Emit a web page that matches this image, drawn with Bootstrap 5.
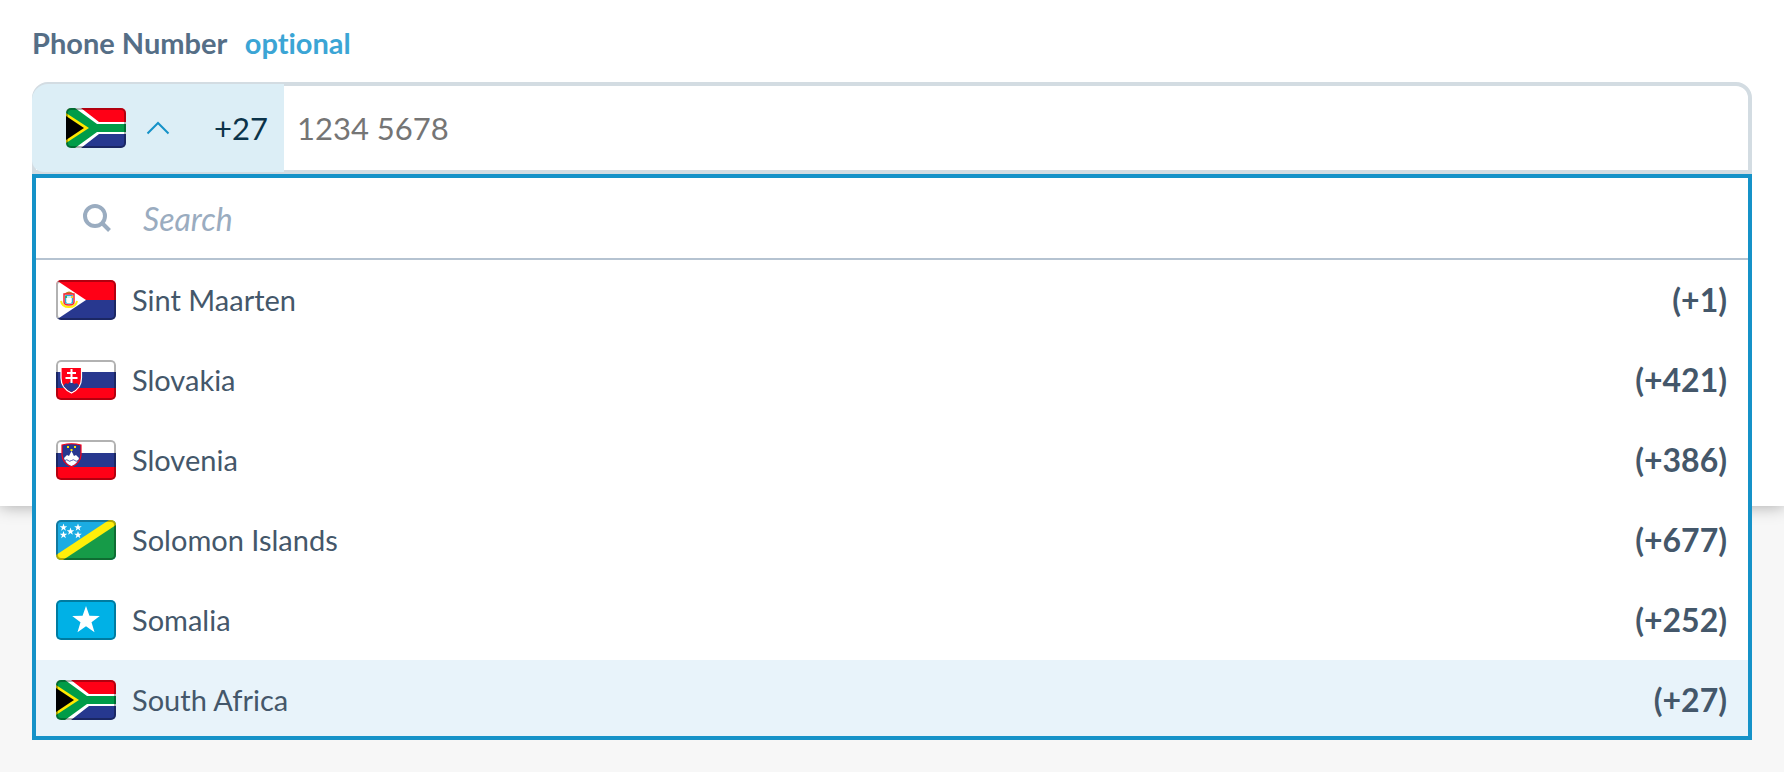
<!DOCTYPE html>
<html lang="en">
<head>
<meta charset="utf-8">
<meta name="viewport" content="width=device-width, initial-scale=1">
<title>Phone Number</title>
<link href="https://cdn.jsdelivr.net/npm/bootstrap@5.3.0/dist/css/bootstrap.min.css" rel="stylesheet">
<style>
  body { font-family: Lato, sans-serif; background: #f7f7f7; color: #44576a; font-size: 29px; font-variant-ligatures: none; }
  .panel { background: #fff; padding: 23px 32px 332px; box-shadow: 0 0 16px rgba(0,0,0,.34); }
  .field-label { color: #556e86; font-weight: 700; line-height: 40px; margin-bottom: 19px; }
  .field-label .hint { color: #3ba5d5; margin-left: 11px; }
  .phone-field { height: 92px; border: 4px solid #d3dce2; border-radius: 16px 16px 0 0; background: #fff; font-size: 31px; }
  .prefix { width: 252px; margin: -2px 0 -2px -4px; padding: 0 16px 0 34px; border: 0; border-radius: 16px 0 0 12px; background: #dceef6; color: #0b3349; }
  .prefix .chevron { margin-left: 20px; }
  .plain-input { border: 0; outline: 0; background: transparent; min-width: 0; }
  .phone-field .plain-input { padding: 0 13px; color: #44576a; }
  .phone-field .plain-input::placeholder { color: #757575; opacity: 1; }
  .country-menu { border: 4px solid #1592c8; background: #fff; z-index: 5; }
  .search-row { height: 82px; border-bottom: 2px solid #b5c3d1; padding-left: 47px; gap: 32px; }
  .search-row .plain-input { font-size: 32px; font-style: italic; padding: 2px 0 0; color: #44576a; }
  .search-row .plain-input::placeholder { color: #9aacc0; opacity: 1; }
  .country-list { max-height: 476px; overflow-y: auto; scrollbar-width: none; }
  .country-list::-webkit-scrollbar { display: none; }
  .country { height: 80px; flex: none; border: 0; background: #fff; color: #44576a; padding: 0 21px 0 20px; gap: 16px; text-align: left; }
  .country.selected { background: #e8f3fa; }
  .country .dial { font-size: 32px; font-weight: 700; }
  .flag { width: 60px; height: 40px; border-radius: 5px; overflow: hidden; flex: none; }
  .flag svg { display: block; }
</style>
</head>
<body class="min-vh-100">
<svg width="0" height="0" class="position-absolute" aria-hidden="true">
  <defs>
    <path id="edge" d="M5 1H55Q59 1 59 5V35Q59 39 55 39H5Q1 39 1 35V5Q1 1 5 1Z" fill="none" stroke="#000" stroke-opacity=".3" stroke-width="2"/>
    <path id="star" d="M0-10L2.36-3.24 9.51-3.09 3.8 1.24 5.88 8.09 0 4 -5.88 8.09 -3.8 1.24 -9.51-3.09 -2.36-3.24Z" fill="#fff"/>
    <symbol id="za" viewBox="0 0 60 40">
      <path fill="#ff0016" d="M0 0H60V20H0Z"/><path fill="#26388f" d="M0 20H60V40H0Z"/>
      <path fill="#fff" d="M0 0H15L33 14H60V26H33L15 40H0Z"/>
      <path fill="#009c48" d="M0 0H9L31 16H60V24H31L9 40H0Z"/>
      <path fill="#ffe900" d="M0 5L23 20 0 35Z"/><path fill="#000" d="M0 8L18 20 0 32Z"/>
      <use href="#edge"/>
    </symbol>
    <symbol id="sx" viewBox="0 0 60 40">
      <path fill="#ff0016" d="M0 0H60V20H0Z"/><path fill="#28388f" d="M0 20H60V40H0Z"/><path fill="#fff" d="M0 0L30 20 0 40Z"/>
      <path d="M5 21Q6 27 13 27Q20 27 21 21" fill="none" stroke="#ffee10" stroke-width="2"/>
      <path d="M8 14Q13 9 18 14Z" fill="#c77a24"/>
      <path d="M8 14H18V22Q18 25 13 25Q8 25 8 22Z" fill="#c9eff8" stroke="#f52735" stroke-width="1.500"/>
      <path d="M9.500 15.500H16.500V23H9.500Z" fill="none" stroke="#2aa9e0"/>
      <path d="M11 18H15V23H11Z" fill="#fff"/><path d="M9 16h2v2H9Z" fill="#35ad60"/><path d="M15 16h2v2h-2Z" fill="#eed42b"/>
      <use href="#edge"/>
    </symbol>
    <symbol id="sk" viewBox="0 0 60 40">
      <path fill="#fff" d="M0 0H60V13H0Z"/><path fill="#28388f" d="M0 12H60V28H0Z"/><path fill="#ff0016" d="M0 28H60V40H0Z"/>
      <path d="M5 7.500H25.500V18Q25.500 28 15.500 33Q5 28 5 18Z" fill="#ff0016" stroke="#fff" stroke-width="1.200"/>
      <path d="M7.500 26Q9 22 12 24Q15 19 18 24Q22 22 23 26Q20 30 15.500 32Q11 30 7.500 26Z" fill="#28388f"/>
      <path d="M15.500 9V23M11 13H20M9.500 18H21.500" stroke="#fff" stroke-width="2" fill="none"/>
      <use href="#edge"/>
    </symbol>
    <symbol id="si" viewBox="0 0 60 40">
      <path fill="#fff" d="M0 0H60V13H0Z"/><path fill="#28388f" d="M0 13H60V27H0Z"/><path fill="#ff0016" d="M0 27H60V40H0Z"/>
      <path d="M6 5Q15.500 2.500 25 5V15Q24.500 23 15.500 27Q6.500 23 6 15Z" fill="#28388f" stroke="#ff0016" stroke-width="1.200"/>
      <path d="M8 18L11 15 13 16 15.500 11 18 16 20 15 23 18Q22 23 15.500 26Q9 23 8 18Z" fill="#fff"/>
      <path d="M9 20.500q2-1.500 3.200 0t3.300 0 3.300 0 3.200 0" stroke="#28388f" stroke-width=".8" fill="none"/>
      <path d="M11 6h2v2h-2ZM18 6h2v2h-2ZM14.500 9h2v2h-2Z" fill="#ffe900"/>
      <use href="#edge"/>
    </symbol>
    <symbol id="sb" viewBox="0 0 60 40">
      <path fill="#1bace3" d="M0 0H60V40H0Z"/><path fill="#169b48" d="M60 0V40H0Z"/>
      <path fill="#ffee0a" d="M0 35L53 0H60V5L7 40H0Z"/>
      <use href="#star" transform="translate(7.500 7.500) scale(.4)"/><use href="#star" transform="translate(22 7.500) scale(.4)"/>
      <use href="#star" transform="translate(14.500 11.500) scale(.4)"/>
      <use href="#star" transform="translate(7.500 15) scale(.4)"/><use href="#star" transform="translate(22 15) scale(.4)"/>
      <use href="#edge"/>
    </symbol>
    <symbol id="so" viewBox="0 0 60 40">
      <path fill="#00b1e6" d="M0 0H60V40H0Z"/><use href="#star" transform="translate(30 20.500) scale(1.450)"/>
      <use href="#edge"/>
    </symbol>
  </defs>
</svg>

<main class="panel">
  <label class="field-label d-block" for="phone">Phone Number <span class="hint">optional</span></label>
  <div class="position-relative">
    <div class="phone-field d-flex">
      <button type="button" class="prefix d-flex align-items-center flex-shrink-0" aria-expanded="true" aria-label="South Africa +27">
        <span class="flag"><svg width="60" height="40"><use href="#za"/></svg></span>
        <svg class="chevron" width="24" height="14" viewBox="0 0 24 14" fill="none" stroke="#1592c8" stroke-width="2"><path d="M1.500 12.500L12 2 22.500 12.500"/></svg>
        <span class="ms-auto">+27</span>
      </button>
      <input class="plain-input flex-grow-1" id="phone" type="tel" placeholder="1234 5678">
    </div>
    <div class="country-menu position-absolute top-100 start-0 w-100">
      <div class="search-row d-flex align-items-center">
        <svg width="28" height="28" viewBox="0 0 28 28" fill="none" stroke="#9aacc0" stroke-width="4" aria-hidden="true"><circle cx="12" cy="12" r="10"/><path d="M19 19L26.500 26.500"/></svg>
        <input class="plain-input flex-grow-1" type="search" placeholder="Search" aria-label="Search">
      </div>
      <div class="country-list d-flex flex-column">
        <button type="button" class="country d-flex align-items-center"><span class="flag"><svg width="60" height="40"><use href="#sx"/></svg></span><span>Sint Maarten</span><span class="dial ms-auto">(+1)</span></button>
        <button type="button" class="country d-flex align-items-center"><span class="flag"><svg width="60" height="40"><use href="#sk"/></svg></span><span>Slovakia</span><span class="dial ms-auto">(+421)</span></button>
        <button type="button" class="country d-flex align-items-center"><span class="flag"><svg width="60" height="40"><use href="#si"/></svg></span><span>Slovenia</span><span class="dial ms-auto">(+386)</span></button>
        <button type="button" class="country d-flex align-items-center"><span class="flag"><svg width="60" height="40"><use href="#sb"/></svg></span><span>Solomon Islands</span><span class="dial ms-auto">(+677)</span></button>
        <button type="button" class="country d-flex align-items-center"><span class="flag"><svg width="60" height="40"><use href="#so"/></svg></span><span>Somalia</span><span class="dial ms-auto">(+252)</span></button>
        <button type="button" class="country selected d-flex align-items-center"><span class="flag"><svg width="60" height="40"><use href="#za"/></svg></span><span>South Africa</span><span class="dial ms-auto">(+27)</span></button>
      </div>
    </div>
  </div>
</main>
<script src="https://cdn.jsdelivr.net/npm/bootstrap@5.3.0/dist/js/bootstrap.bundle.min.js"></script>
</body>
</html>
